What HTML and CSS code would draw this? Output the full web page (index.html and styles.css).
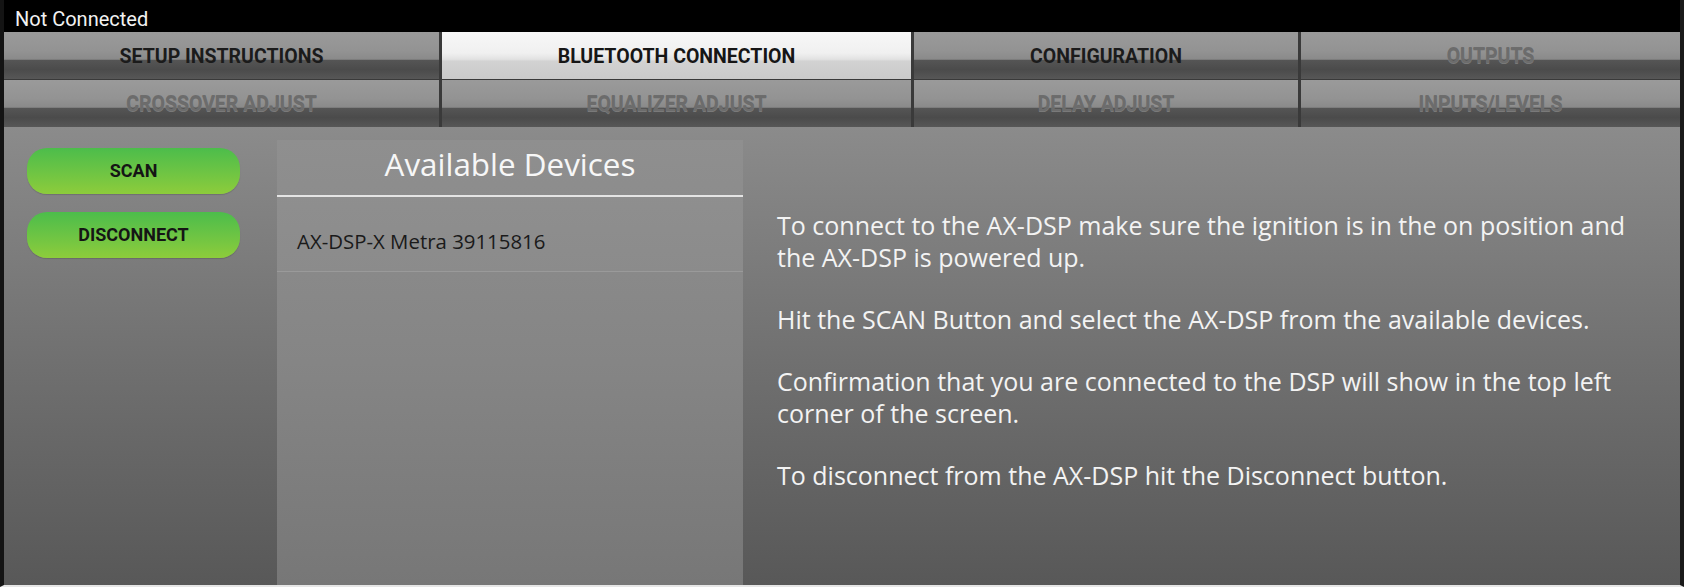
FILE: index.html
```html
<!DOCTYPE html>
<html>
<head>
<meta charset="utf-8">
<link rel="stylesheet" href="styles.css">
</head>
<body>
<div class="app">
  <div class="topbar">Not Connected</div>
  <div class="tabs">
    <div class="tab">SETUP INSTRUCTIONS</div>
    <div class="tab selected">BLUETOOTH CONNECTION</div>
    <div class="tab">CONFIGURATION</div>
    <div class="tab disabled">OUTPUTS</div>
    <div class="tab disabled">CROSSOVER ADJUST</div>
    <div class="tab disabled">EQUALIZER ADJUST</div>
    <div class="tab disabled">DELAY ADJUST</div>
    <div class="tab disabled">INPUTS/LEVELS</div>
  </div>
  <div class="content">
    <div class="actions">
      <div class="btn">SCAN</div>
      <div class="btn">DISCONNECT</div>
    </div>
    <div class="devices">
      <div class="devices-title">Available Devices</div>
      <div class="device">AX-DSP-X Metra 39115816</div>
      <div class="devices-rest"></div>
    </div>
    <div class="info">
      <p>To connect to the AX-DSP make sure the ignition is in the on position and the AX-DSP is powered up.</p>
      <p>Hit the SCAN Button and select the AX-DSP from the available devices.</p>
      <p>Confirmation that you are connected to the DSP will show in the top left corner of the screen.</p>
      <p>To disconnect from the AX-DSP hit the Disconnect button.</p>
    </div>
  </div>
</div>
</body>
</html>
```
FILE: styles.css
```css
* { box-sizing: border-box; }
html, body { margin: 0; padding: 0; background: #111; }
body { font-family: "Open Sans", "Noto Sans", "Liberation Sans", sans-serif; }

.app {
  width: 1684px;
  height: 587px;
  display: flex;
  flex-direction: column;
  background: #111;
  border-left: 4px solid #141414;
  border-right: 4px solid #1a1a1a;
  border-bottom: 2px solid #e6e6e6;
}

.topbar {
  height: 32px;
  background: #000;
  color: #f2f2f2;
  font-family: Roboto, "Open Sans", sans-serif;
  font-size: 20px;
  padding-left: 11px;
  padding-top: 5px;
  display: flex;
  align-items: center;
}

.tabs {
  display: grid;
  grid-template-columns: 435px 469px 384px 1fr;
  grid-template-rows: 47px 47px;
  column-gap: 3px;
  row-gap: 1px;
  background: #3a3a3a;
}

.tab {
  display: flex;
  align-items: center;
  justify-content: center;
  font-family: Roboto, "Open Sans", sans-serif;
  font-size: 19.5px;
  font-weight: 700;
  color: #1b1b1b;
  padding-top: 1px;
  background: linear-gradient(to bottom,
    #9a9a9a 0%, #939393 40%, #8a8a8a 58%,
    #555 60%, #4b4b4b 80%, #575757 100%);
}

.tab.selected {
  background: linear-gradient(to bottom,
    #f7f7f7 0%, #f0f0f0 45%, #e2e2e2 58%,
    #d2d2d2 62%, #cacaca 100%);
  color: #161616;
}

.tab.disabled {
  color: #6c6c6c;
  text-shadow: 0 1px 0 rgba(150,150,150,0.6), 0 -1px 0 rgba(70,70,70,0.5);
}

.content {
  flex: 1;
  display: grid;
  grid-template-columns: 273px 466px 1fr;
  background: linear-gradient(to bottom, #8b8b8b 0%, #6e6e6e 55%, #585858 100%);
  overflow: hidden;
}

.actions {
  display: flex;
  flex-direction: column;
  gap: 18px;
  padding: 21px 0 0 23px;
}

.btn {
  width: 213px;
  height: 46px;
  border-radius: 20px;
  background: linear-gradient(to bottom, #4cbd4b 0%, #6cc444 50%, #8dcc3b 100%);
  color: #151515;
  font-family: Roboto, "Open Sans", sans-serif;
  font-weight: 700;
  font-size: 18px;
  padding-bottom: 2px;
  display: flex;
  align-items: center;
  justify-content: center;
  box-shadow: 0 1px 1px rgba(0,0,0,0.15);
}

.devices {
  margin-top: 13px;
  display: flex;
  flex-direction: column;
  background: linear-gradient(to bottom, #8f8f8f 0%, #858585 50%, #777 100%);
}

.devices-title {
  height: 57px;
  border-bottom: 2px solid #e4e4e4;
  color: #f7f7f7;
  font-size: 31.4px;
  display: flex;
  align-items: center;
  justify-content: center;
  padding-bottom: 9px;
}

.device {
  height: 75px;
  padding: 14px 0 0 20px;
  display: flex;
  align-items: center;
  color: #1a1a1a;
  font-size: 20.4px;
  border-bottom: 1px solid #9a9a9a;
  background: rgba(255,255,255,0.02);
}

.devices-rest { flex: 1; }

.info {
  padding: 82px 16px 0 34px;
  color: #f3f3f3;
  font-size: 25px;
  line-height: 32px;
}

.info p {
  margin: 0 0 30px 0;
  max-width: 870px;
}
```
